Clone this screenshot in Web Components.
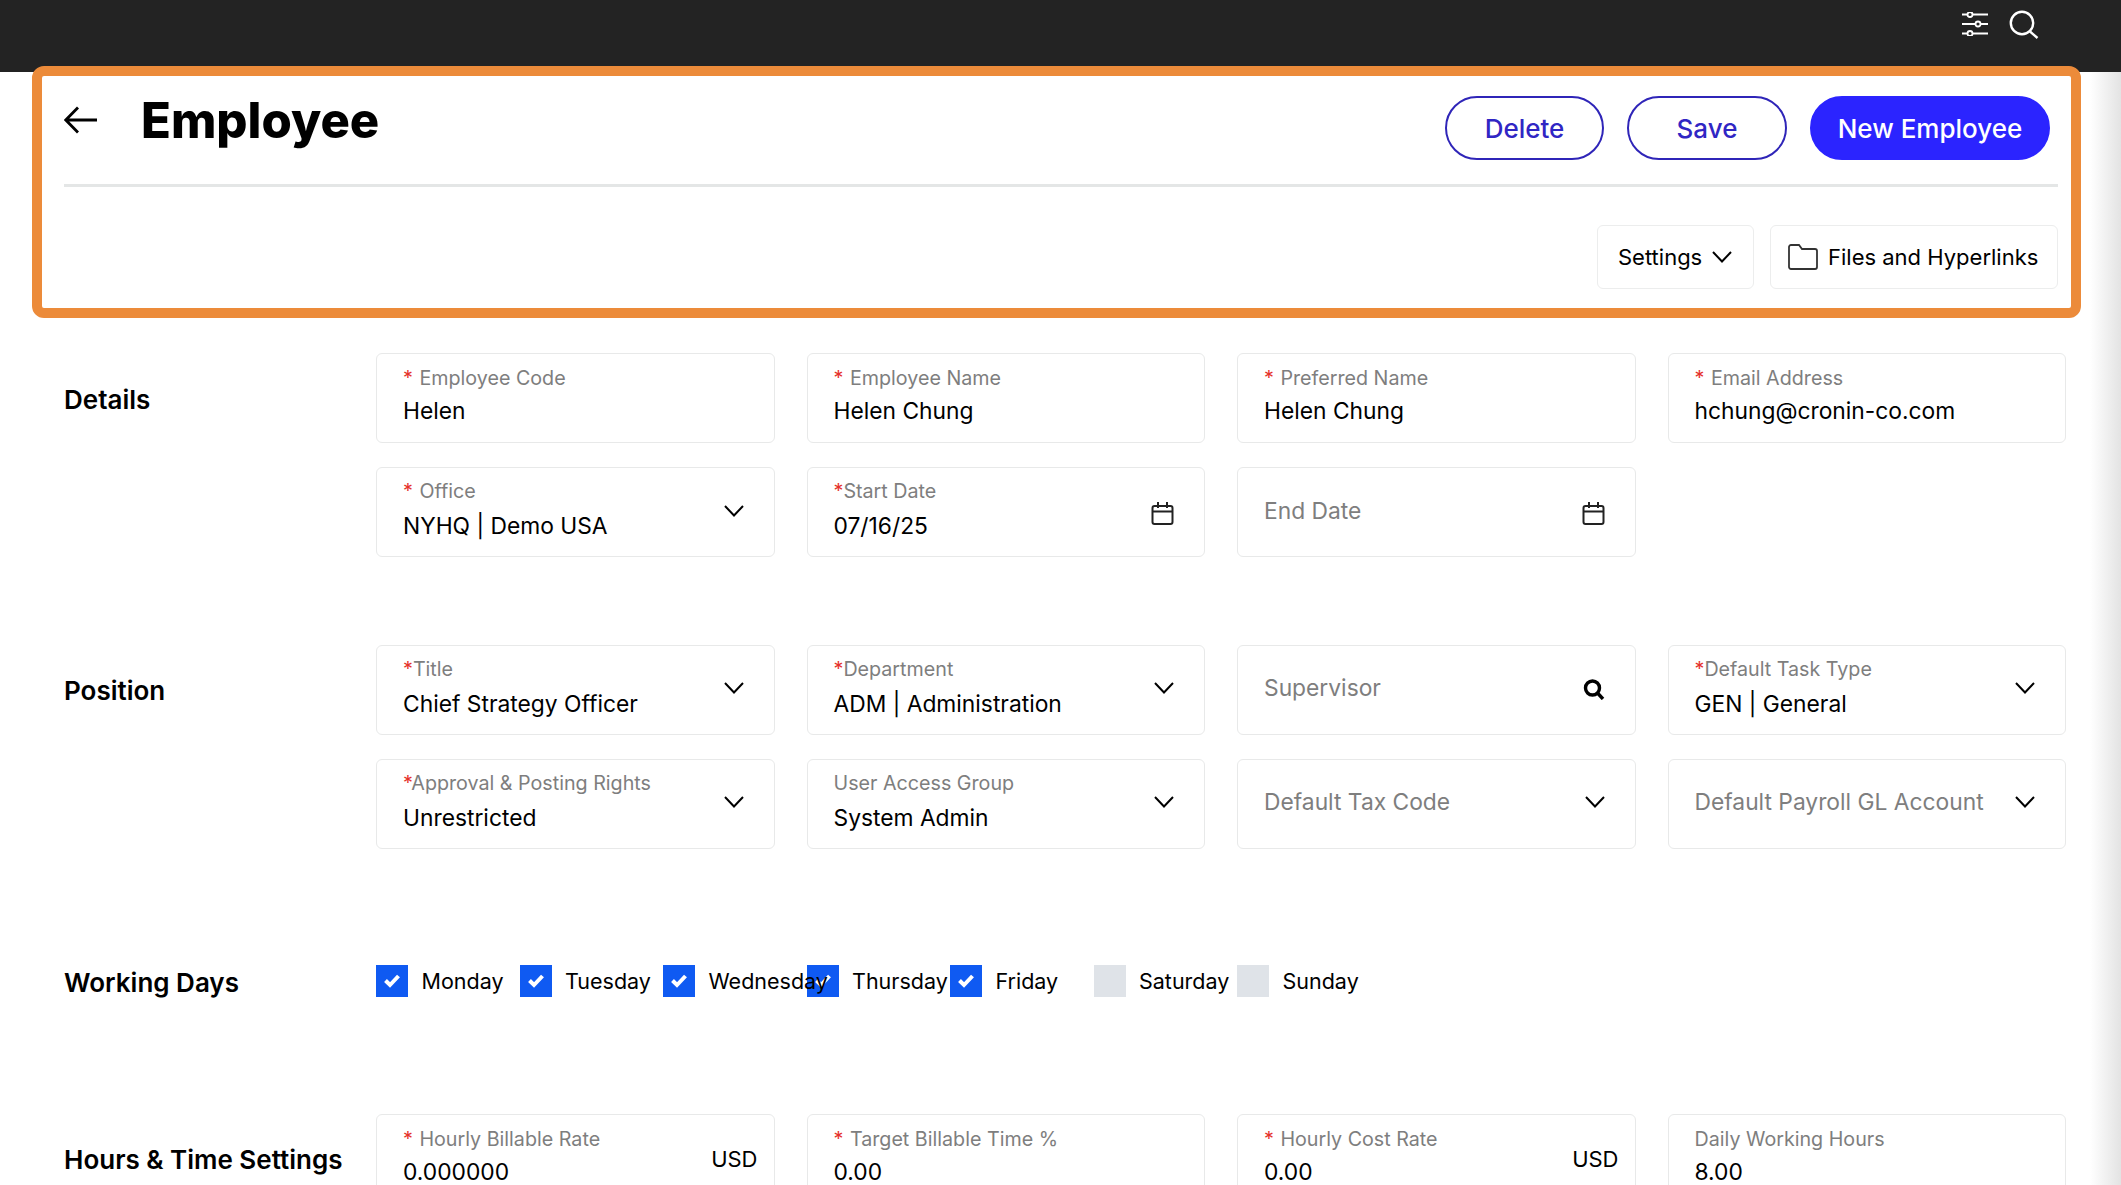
<!DOCTYPE html>
<html lang="en">
<head>
<meta charset="utf-8">
<title>Employee</title>
<style>
  html, body { margin: 0; height: 100%; overflow: hidden; }
  body { font-family: Inter, "Open Sans", sans-serif; color: #000; background: #fff; }
</style>
</head>
<body>
<app-topbar></app-topbar>
<employee-page>
  <page-header slot="header" title="Employee">
    <pill-button slot="actions">Delete</pill-button>
    <pill-button slot="actions">Save</pill-button>
    <pill-button slot="actions" primary>New Employee</pill-button>
    <tool-button slot="tools" kind="settings">Settings</tool-button>
    <tool-button slot="tools" kind="files">Files and Hyperlinks</tool-button>
  </page-header>

  <form-section heading="Details">
    <form-field label="Employee Code" req="spaced">Helen</form-field>
    <form-field label="Employee Name" req="spaced">Helen Chung</form-field>
    <form-field label="Preferred Name" req="spaced">Helen Chung</form-field>
    <form-field label="Email Address" req="spaced">hchung@cronin-co.com</form-field>
    <form-field label="Office" req="spaced" icon="chevron">NYHQ | Demo USA</form-field>
    <form-field label="Start Date" req="tight" icon="calendar">07/16/25</form-field>
    <form-field label="End Date" icon="calendar"></form-field>
  </form-section>

  <form-section heading="Position">
    <form-field label="Title" req="tight" icon="chevron">Chief Strategy Officer</form-field>
    <form-field label="Department" req="tight" icon="chevron">ADM | Administration</form-field>
    <form-field label="Supervisor" icon="search"></form-field>
    <form-field label="Default Task Type" req="tight" icon="chevron">GEN | General</form-field>
    <form-field label="Approval &amp; Posting Rights" req="tight" icon="chevron">Unrestricted</form-field>
    <form-field label="User Access Group" icon="chevron">System Admin</form-field>
    <form-field label="Default Tax Code" icon="chevron"></form-field>
    <form-field label="Default Payroll GL Account" icon="chevron"></form-field>
  </form-section>

  <form-section heading="Working Days">
    <day-list>
      <day-check checked>Monday</day-check>
      <day-check checked>Tuesday</day-check>
      <day-check checked>Wednesday</day-check>
      <day-check checked>Thursday</day-check>
      <day-check checked>Friday</day-check>
      <day-check>Saturday</day-check>
      <day-check>Sunday</day-check>
    </day-list>
  </form-section>

  <form-section heading="Hours &amp; Time Settings">
    <form-field label="Hourly Billable Rate" req="spaced" unit="USD">0.000000</form-field>
    <form-field label="Target Billable Time %" req="spaced">0.00</form-field>
    <form-field label="Hourly Cost Rate" req="spaced" unit="USD">0.00</form-field>
    <form-field label="Daily Working Hours">8.00</form-field>
  </form-section>
</employee-page>

<script>
  const ICONS = {
    chevron: '<svg class="chevron" width="20" height="12" viewBox="0 0 20 12" fill="none" stroke="#000" stroke-width="2"><path d="M1 1l9 9.500L19 1"/></svg>',
    calendar: '<svg class="calendar" width="23" height="23" viewBox="0 0 23 23" fill="none" stroke="#222" stroke-width="2"><rect x="1.500" y="4" width="20" height="18" rx="2"/><path d="M1.500 9.500h20M7 0v6M16 0v6"/></svg>',
    search: '<svg class="search" width="22" height="21" viewBox="0 0 22 21" fill="none" stroke="#000" stroke-width="3.400"><circle cx="9.500" cy="9" r="7"/><path d="M14.500 14l5.500 6"/></svg>'
  };

  class AppTopbar extends HTMLElement {
    constructor() {
      super();
      this.attachShadow({ mode: 'open' });
    }
    connectedCallback() {
      this.shadowRoot.innerHTML = `
        <style>
          :host { display: flex; justify-content: flex-end; align-items: flex-start; gap: 21px;
                  height: 72px; padding: 10px 82px 0 0; box-sizing: border-box; background: #232323; }
          svg { display: block; }
          .sliders { margin-top: 2px; }
        </style>
        <svg class="sliders" width="26" height="24" viewBox="0 0 26 24" fill="none" stroke="#fff" stroke-width="1.800">
          <path d="M0 2.500h5.500M10.500 2.500H26M0 12h13.500M18.500 12H26M0 21.500h5.500M10.500 21.500H26"/>
          <circle cx="8" cy="2.500" r="2.500"/><circle cx="16" cy="12" r="2.500"/><circle cx="8" cy="21.500" r="2.500"/>
        </svg>
        <svg width="30" height="29" viewBox="0 0 30 29" fill="none" stroke="#fff" stroke-width="2.400">
          <circle cx="13" cy="13" r="11.200"/><path d="M21 21.500l7.500 6.500"/>
        </svg>`;
    }
  }

  class EmployeePage extends HTMLElement {
    constructor() {
      super();
      this.attachShadow({ mode: 'open' });
    }
    connectedCallback() {
      this.shadowRoot.innerHTML = `
        <style>
          :host { display: block; height: calc(100vh - 72px);
                  background: linear-gradient(to right, #fff 2090px, #e3e3e3 2121px); }
          .form { display: flex; flex-direction: column; gap: 87.500px; padding: 35px 0 0 64px; }
        </style>
        <slot name="header"></slot>
        <div class="form"><slot></slot></div>`;
    }
  }

  class PageHeader extends HTMLElement {
    constructor() {
      super();
      this.attachShadow({ mode: 'open' });
    }
    connectedCallback() {
      this.shadowRoot.innerHTML = `
        <style>
          :host { display: block; position: relative; height: 246px; padding: 24px 63px 0 64px; box-sizing: border-box; }
          .top { display: flex; align-items: center; height: 64px; padding-right: 8px; padding-bottom: 24px;
                 border-bottom: 3px solid #e4e6e6; }
          .back { display: block; margin-right: 43px; margin-top: -16px; }
          h1 { flex: 1; margin: -14px 0 0; font-size: 49px; font-weight: 800; line-height: 64px; }
          .actions { display: flex; gap: 23px; }
          .tools { display: flex; justify-content: flex-end; gap: 16px; margin-top: 38px; }
          .marker { position: absolute; top: -6px; left: 32px; right: 40px; bottom: 0; box-sizing: border-box;
                    border: 10.500px solid #ec8b3a; border-radius: 12px; pointer-events: none; }
        </style>
        <div class="top">
          <svg class="back" width="34" height="28" viewBox="0 0 34 28" fill="none" stroke="#000" stroke-width="2.800">
            <path d="M33 14H2M14 1.500L1.800 14 14 26.500"/>
          </svg>
          <h1>${this.getAttribute('title')}</h1>
          <div class="actions"><slot name="actions"></slot></div>
        </div>
        <div class="tools"><slot name="tools"></slot></div>
        <div class="marker"></div>`;
    }
  }

  class PillButton extends HTMLElement {
    constructor() {
      super();
      this.attachShadow({ mode: 'open' });
    }
    connectedCallback() {
      this.shadowRoot.innerHTML = `
        <style>
          :host { display: flex; align-items: center; justify-content: center; box-sizing: border-box;
                  width: 160px; height: 64px; border: 2px solid #2f25b8; border-radius: 32px;
                  color: #3026c4; font-size: 26px; font-weight: 500; }
          :host(:first-child) { width: 159px; }
          :host([primary]) { width: 240px; background: #2b24ff; border-color: #2b24ff; color: #fff; }
        </style>
        <slot></slot>`;
    }
  }

  class ToolButton extends HTMLElement {
    constructor() {
      super();
      this.attachShadow({ mode: 'open' });
    }
    connectedCallback() {
      const settings = this.getAttribute('kind') === 'settings';
      const folder = '<svg width="30" height="26" viewBox="0 0 30 26" fill="none" stroke="#333" stroke-width="1.800"><path d="M1 3a2 2 0 0 1 2-2h8l3 4h13a2 2 0 0 1 2 2v16a2 2 0 0 1-2 2H3a2 2 0 0 1-2-2z"/></svg>';
      this.shadowRoot.innerHTML = `
        <style>
          :host { display: flex; align-items: center; box-sizing: border-box; height: 64px;
                  border: 1.500px solid #eceded; border-radius: 6px; font-size: 22px; background: #fff; }
          :host([kind=settings]) { width: 157px; padding-left: 20px; gap: 10px; }
          :host([kind=files]) { width: 288px; padding-left: 17px; gap: 10px; }
          svg { display: block; flex: none; }
        </style>
        ${settings ? '' : folder}<slot></slot>${settings ? ICONS.chevron : ''}`;
    }
  }

  class FormSection extends HTMLElement {
    constructor() {
      super();
      this.attachShadow({ mode: 'open' });
    }
    connectedCallback() {
      this.shadowRoot.innerHTML = `
        <style>
          :host { display: grid; grid-template-columns: 312px 1690px; }
          h2 { margin: 0; height: 90px; box-sizing: border-box; padding-top: 2px; display: flex; align-items: center;
               font-size: 26px; font-weight: 600; white-space: nowrap; }
          .grid { display: grid; grid-template-columns: repeat(4, 1fr); column-gap: 32px; row-gap: 24px; }
          ::slotted(day-list) { grid-column: 1 / -1; }
        </style>
        <h2>${this.getAttribute('heading')}</h2>
        <div class="grid"><slot></slot></div>`;
    }
  }

  class FormField extends HTMLElement {
    constructor() {
      super();
      this.attachShadow({ mode: 'open' });
    }
    connectedCallback() {
      const req = this.getAttribute('req');
      const icon = this.getAttribute('icon');
      const unit = this.getAttribute('unit');
      const empty = !this.textContent.trim();
      const star = req ? `<span class="star ${req}">*</span>${req === 'spaced' ? ' ' : ''}` : '';
      this.shadowRoot.innerHTML = `
        <style>
          :host { display: flex; align-items: center; box-sizing: border-box; height: 90px; min-width: 0;
                  padding: 0 30px 0 26px; background: #fff; border: 1.500px solid #e8e9e9; border-radius: 6px; }
          .text { flex: 1; min-width: 0; padding-bottom: 5px; }
          .label { font-size: 19.700px; line-height: 24px; color: #7e7e7e; white-space: nowrap; }
          .star { color: #e5312b; }
          .star.spaced { margin-right: 1px; }
          .value { margin-top: 7px; font-size: 22.800px; line-height: 28px; white-space: nowrap; }
          :host([icon]) .value { margin-top: 9px; }
          .empty { padding-bottom: 3px; }
          .empty .label { font-size: 22.800px; line-height: 28px; }
          .empty .value { display: none; }
          .unit { font-size: 22px; margin-right: -14px; }
          svg { display: block; flex: none; }
          .chevron { margin-top: -3px; }
          .calendar { margin-top: 2px; }
          .search { margin-top: -1px; }
        </style>
        <div class="text ${empty ? 'empty' : ''}">
          <div class="label">${star}${this.getAttribute('label')}</div>
          <div class="value"><slot></slot></div>
        </div>
        ${icon ? ICONS[icon] : ''}
        ${unit ? `<span class="unit">${unit}</span>` : ''}`;
    }
  }

  class DayList extends HTMLElement {
    constructor() {
      super();
      this.attachShadow({ mode: 'open' });
    }
    connectedCallback() {
      this.shadowRoot.innerHTML = `
        <style>
          :host { display: grid; grid-template-columns: repeat(7, 143.500px); align-items: center; height: 90px; }
        </style>
        <slot></slot>`;
    }
  }

  class DayCheck extends HTMLElement {
    constructor() {
      super();
      this.attachShadow({ mode: 'open' });
    }
    connectedCallback() {
      const tick = '<svg width="18" height="14" viewBox="0 0 18 14" fill="none" stroke="#fff" stroke-width="4"><path d="M2.500 6.500l4.500 4.500 8.500-9"/></svg>';
      this.shadowRoot.innerHTML = `
        <style>
          :host { display: flex; align-items: center; gap: 13.500px; min-width: 0; }
          .box { flex: none; display: flex; align-items: center; justify-content: center;
                 width: 32px; height: 32px; background: #dfe3e8; }
          :host([checked]) .box { background: #0f5af2; }
          .name { position: relative; z-index: 1; font-size: 21.500px; white-space: nowrap; }
        </style>
        <span class="box">${this.hasAttribute('checked') ? tick : ''}</span>
        <span class="name"><slot></slot></span>`;
    }
  }

  customElements.define('app-topbar', AppTopbar);
  customElements.define('employee-page', EmployeePage);
  customElements.define('page-header', PageHeader);
  customElements.define('pill-button', PillButton);
  customElements.define('tool-button', ToolButton);
  customElements.define('form-section', FormSection);
  customElements.define('form-field', FormField);
  customElements.define('day-list', DayList);
  customElements.define('day-check', DayCheck);
</script>
</body>
</html>
